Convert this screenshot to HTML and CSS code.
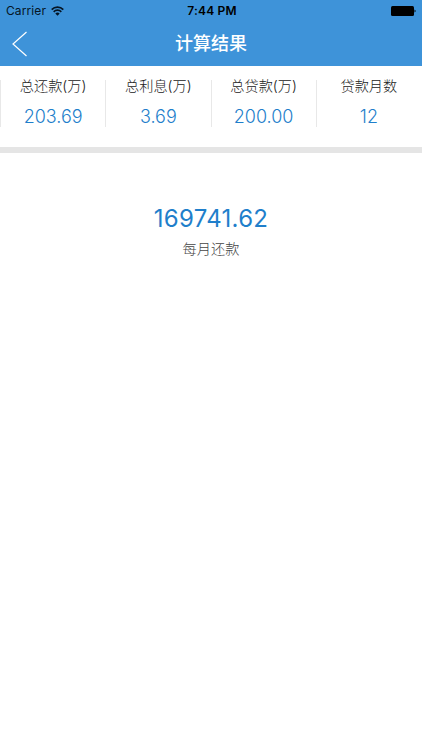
FILE: index.html
```html
<!DOCTYPE html>
<html lang="zh-CN">
<head>
    <meta charset="UTF-8">
    <meta name="viewport" content="width=device-width, initial-scale=1.0">
    <title>计算结果</title>
    <link rel="stylesheet" href="styles.css">
</head>
<body>
    <header>
        <div class="status-bar">
            <div class="carrier">
                <span>Carrier</span>
                <svg class="wifi" width="13" height="10" viewBox="0 0 13 10">
                    <path d="M0.7 3.6a8.2 8.2 0 0 1 11.6 0M2.7 5.8a5.3 5.3 0 0 1 7.6 0" fill="none" stroke="#051525" stroke-width="1.7"/>
                    <path d="M4.3 7.6a3 3 0 0 1 4.4 0L6.5 9.8z" fill="#051525"/>
                </svg>
            </div>
            <span class="time">7:44 PM</span>
            <svg class="battery" width="26" height="10" viewBox="0 0 26 10">
                <rect x="1" y="0" width="23" height="10" rx="1.5"/>
                <path d="M24.5 3.4q2.4 1.6 0 3.2z"/>
            </svg>
        </div>
        <div class="nav-bar">
            <a class="back" href="#" aria-label="返回">
                <svg width="16" height="26" viewBox="0 0 16 26">
                    <path d="M14.5 1L1 13l13.5 12" fill="none" stroke="#fff" stroke-width="1.2"/>
                </svg>
            </a>
            <h1>计算结果</h1>
        </div>
    </header>
    <section class="summary">
        <div class="item">
            <span class="label">总还款(万)</span>
            <span class="value">203.69</span>
        </div>
        <div class="item">
            <span class="label">总利息(万)</span>
            <span class="value">3.69</span>
        </div>
        <div class="item">
            <span class="label">总贷款(万)</span>
            <span class="value">200.00</span>
        </div>
        <div class="item">
            <span class="label">贷款月数</span>
            <span class="value">12</span>
        </div>
    </section>
    <main class="monthly">
        <span class="amount">169741.62</span>
        <span class="caption">每月还款</span>
    </main>
</body>
</html>
```
FILE: styles.css
```css
body {
    margin: 0;
    min-height: 100vh;
    background-color: #fff;
    font-family: Inter, "Noto Sans CJK SC", sans-serif;
}

header {
    height: 66px;
    background-color: #3e93d9;
}

.status-bar {
    display: grid;
    grid-template-columns: 1fr auto 1fr;
    align-items: center;
    height: 22px;
    padding: 0 6px;
    font-size: 12px;
    color: #051525;
}

.carrier {
    display: flex;
    align-items: center;
    gap: 5px;
    margin-top: -1px;
    letter-spacing: 0.1px;
}

.time {
    margin-top: -1px;
    padding-left: 2px;
    font-weight: 600;
    letter-spacing: 0.2px;
    color: #000;
}

.battery {
    justify-self: end;
    margin-top: -1px;
}

.nav-bar {
    display: grid;
    grid-template-columns: 1fr auto 1fr;
    align-items: center;
    height: 44px;
    padding: 0 12px;
}

.back {
    display: flex;
}

h1 {
    margin: 0;
    font-size: 18px;
    font-weight: 500;
    line-height: 26px;
    color: #fff;
}

.summary {
    display: grid;
    grid-template-columns: repeat(4, 1fr);
    height: 68px;
    padding: 13px 1px 0 0;
    border-bottom: 6px solid #e5e5e5;
}

.item {
    display: flex;
    flex-direction: column;
    align-items: center;
    height: 47px;
    margin-top: 1px;
    border-left: 1px solid #e8e8e8;
}

.label {
    margin-top: -1px;
    font-size: 14.2px;
    font-weight: 300;
    line-height: 14px;
    color: #222;
}

.value {
    margin-top: 12px;
    font-size: 18px;
    font-weight: 350;
    line-height: 24px;
    color: #1f7fcb;
}

.monthly {
    display: flex;
    flex-direction: column;
    align-items: center;
    padding-top: 51px;
}

.amount {
    font-size: 24px;
    font-weight: 380;
    line-height: 30px;
    letter-spacing: 0.3px;
    color: #1f7fcb;
}

.caption {
    margin-top: 4px;
    font-size: 14.2px;
    font-weight: 300;
    line-height: 22px;
    color: #444;
}
```
